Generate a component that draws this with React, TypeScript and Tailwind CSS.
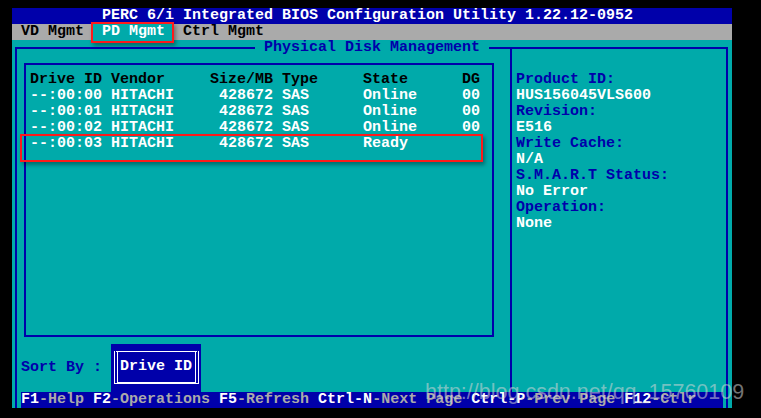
const BLUE = "text-[#0000aa]";

const drives = [
  { id: "--:00:00", vendor: "HITACHI", size: "428672", type: "SAS", state: "Online", dg: "00" },
  { id: "--:00:01", vendor: "HITACHI", size: "428672", type: "SAS", state: "Online", dg: "00" },
  { id: "--:00:02", vendor: "HITACHI", size: "428672", type: "SAS", state: "Online", dg: "00" },
  { id: "--:00:03", vendor: "HITACHI", size: "428672", type: "SAS", state: "Ready", dg: "" },
];

const details = [
  ["Product ID:", "HUS156045VLS600"],
  ["Revision:", "E516"],
  ["Write Cache:", "N/A"],
  ["S.M.A.R.T Status:", "No Error"],
  ["Operation:", "None"],
];

const keys = [
  ["F1", "-Help "],
  ["F2", "-Operations "],
  ["F5", "-Refresh "],
  ["Ctrl-N", "-Next Page "],
  ["Ctrl-P", "-Prev Page "],
  ["F12", "-Ctlr"],
];

const rowCols = "grid grid-cols-[81px_99px_72px_81px_99px_18px] h-[16px]";

function DriveTable() {
  return (
    <div className="pl-[4px] pt-[7px]">
      <div className={`${rowCols} text-black`}>
        <span>Drive ID</span>
        <span>Vendor</span>
        <span className="pr-[9px] text-right">Size/MB</span>
        <span>Type</span>
        <span>State</span>
        <span>DG</span>
      </div>
      {drives.map((d, i) => (
        <div key={d.id} className={`${rowCols} relative text-white`}>
          <span>{d.id}</span>
          <span>{d.vendor}</span>
          <span className="pr-[9px] text-right">{d.size}</span>
          <span>{d.type}</span>
          <span>{d.state}</span>
          <span>{d.dg}</span>
          {i === 3 && (
            <div className="absolute -left-[10px] -top-[2px] h-[28px] w-[463px] border-2 border-[#ff1a1a] shadow-[2px_3px_4px_rgba(0,0,0,0.35)]" />
          )}
        </div>
      ))}
    </div>
  );
}

export default function App() {
  return (
    <div className="relative h-[418px] w-[761px] overflow-hidden bg-black pl-[12px] pt-[8px] font-['Liberation_Mono',monospace] text-[15px] font-bold leading-[16px]">
      <div className="flex h-[400px] w-[720px] flex-col">
        {/* title row */}
        <div className="h-[16px] bg-[#0000aa] pl-[90px] whitespace-pre text-white">
          PERC 6/i Integrated BIOS Configuration Utility 1.22.12-0952
        </div>

        {/* menu row */}
        <div className="flex h-[16px] bg-[#aaaaaa] pl-[9px] whitespace-pre text-black">
          <span>VD Mgmt</span>
          <span className="relative ml-[9px] bg-[#00aaaa] px-[9px] text-white">
            PD Mgmt
            <span className="absolute -left-[2px] -top-[2px] h-[21px] w-[83px] border-2 border-[#ff1a1a] shadow-[2px_3px_4px_rgba(0,0,0,0.35)]" />
          </span>
          <span className="ml-[9px]">Ctrl Mgmt</span>
        </div>

        {/* teal work area */}
        <div className="flex h-[368px] flex-col bg-[#00aaaa]">
          <div className="relative ml-[3px] mt-[7px] flex w-[713px] flex-1 flex-col border-x-2 border-t-2 border-[#0000aa]">
            <span className={`absolute -top-[9px] left-[238px] h-[16px] w-[234px] bg-[#00aaaa] px-[9px] whitespace-pre ${BLUE}`}>
              Physical Disk Management
            </span>

            <div className="flex flex-1">
              {/* left: drive list and sort control */}
              <div className="flex w-[493px] flex-col">
                <div className="ml-[7px] mt-[14px] h-[274px] w-[470px] border-2 border-[#0000aa]">
                  <DriveTable />
                </div>
                <div className="mt-[7px] flex h-[48px] items-center pl-[4px]">
                  <span className={`whitespace-pre ${BLUE}`}>Sort By :</span>
                  <div className="ml-[9px] h-[48px] w-[90px] bg-[#0000aa] pb-[8px] pl-[3px] pr-[2px] pt-[7px]">
                    <div className="flex h-full items-center border-x-[4px] border-t border-b-2 border-double border-white pl-[2px] whitespace-pre text-white">
                      Drive ID
                    </div>
                  </div>
                </div>
              </div>

              {/* right: selected disk details */}
              <div className="flex-1 border-l-2 border-[#0000aa] pl-[4px] pt-[23px]">
                {details.map(([label, value]) => (
                  <div key={label}>
                    <div className={`h-[16px] whitespace-pre ${BLUE}`}>{label}</div>
                    <div className="h-[16px] whitespace-pre text-white">{value}</div>
                  </div>
                ))}
              </div>
            </div>

            {/* key help */}
            <div className="ml-[4px] h-[16px] w-[702px] bg-[#0000aa] whitespace-pre">
              {keys.map(([k, desc]) => (
                <span key={k}>
                  <span className="text-white">{k}</span>
                  <span className="text-[#aaaaaa]">{desc}</span>
                </span>
              ))}
            </div>
          </div>
        </div>
      </div>

      <span className="pointer-events-none absolute left-[425px] top-[379px] whitespace-pre font-['Liberation_Sans',sans-serif] text-[21.5px] font-normal leading-[26px] text-[rgba(215,215,215,0.55)]">
        http://blog.csdn.net/qq_15760109
      </span>
    </div>
  );
}
